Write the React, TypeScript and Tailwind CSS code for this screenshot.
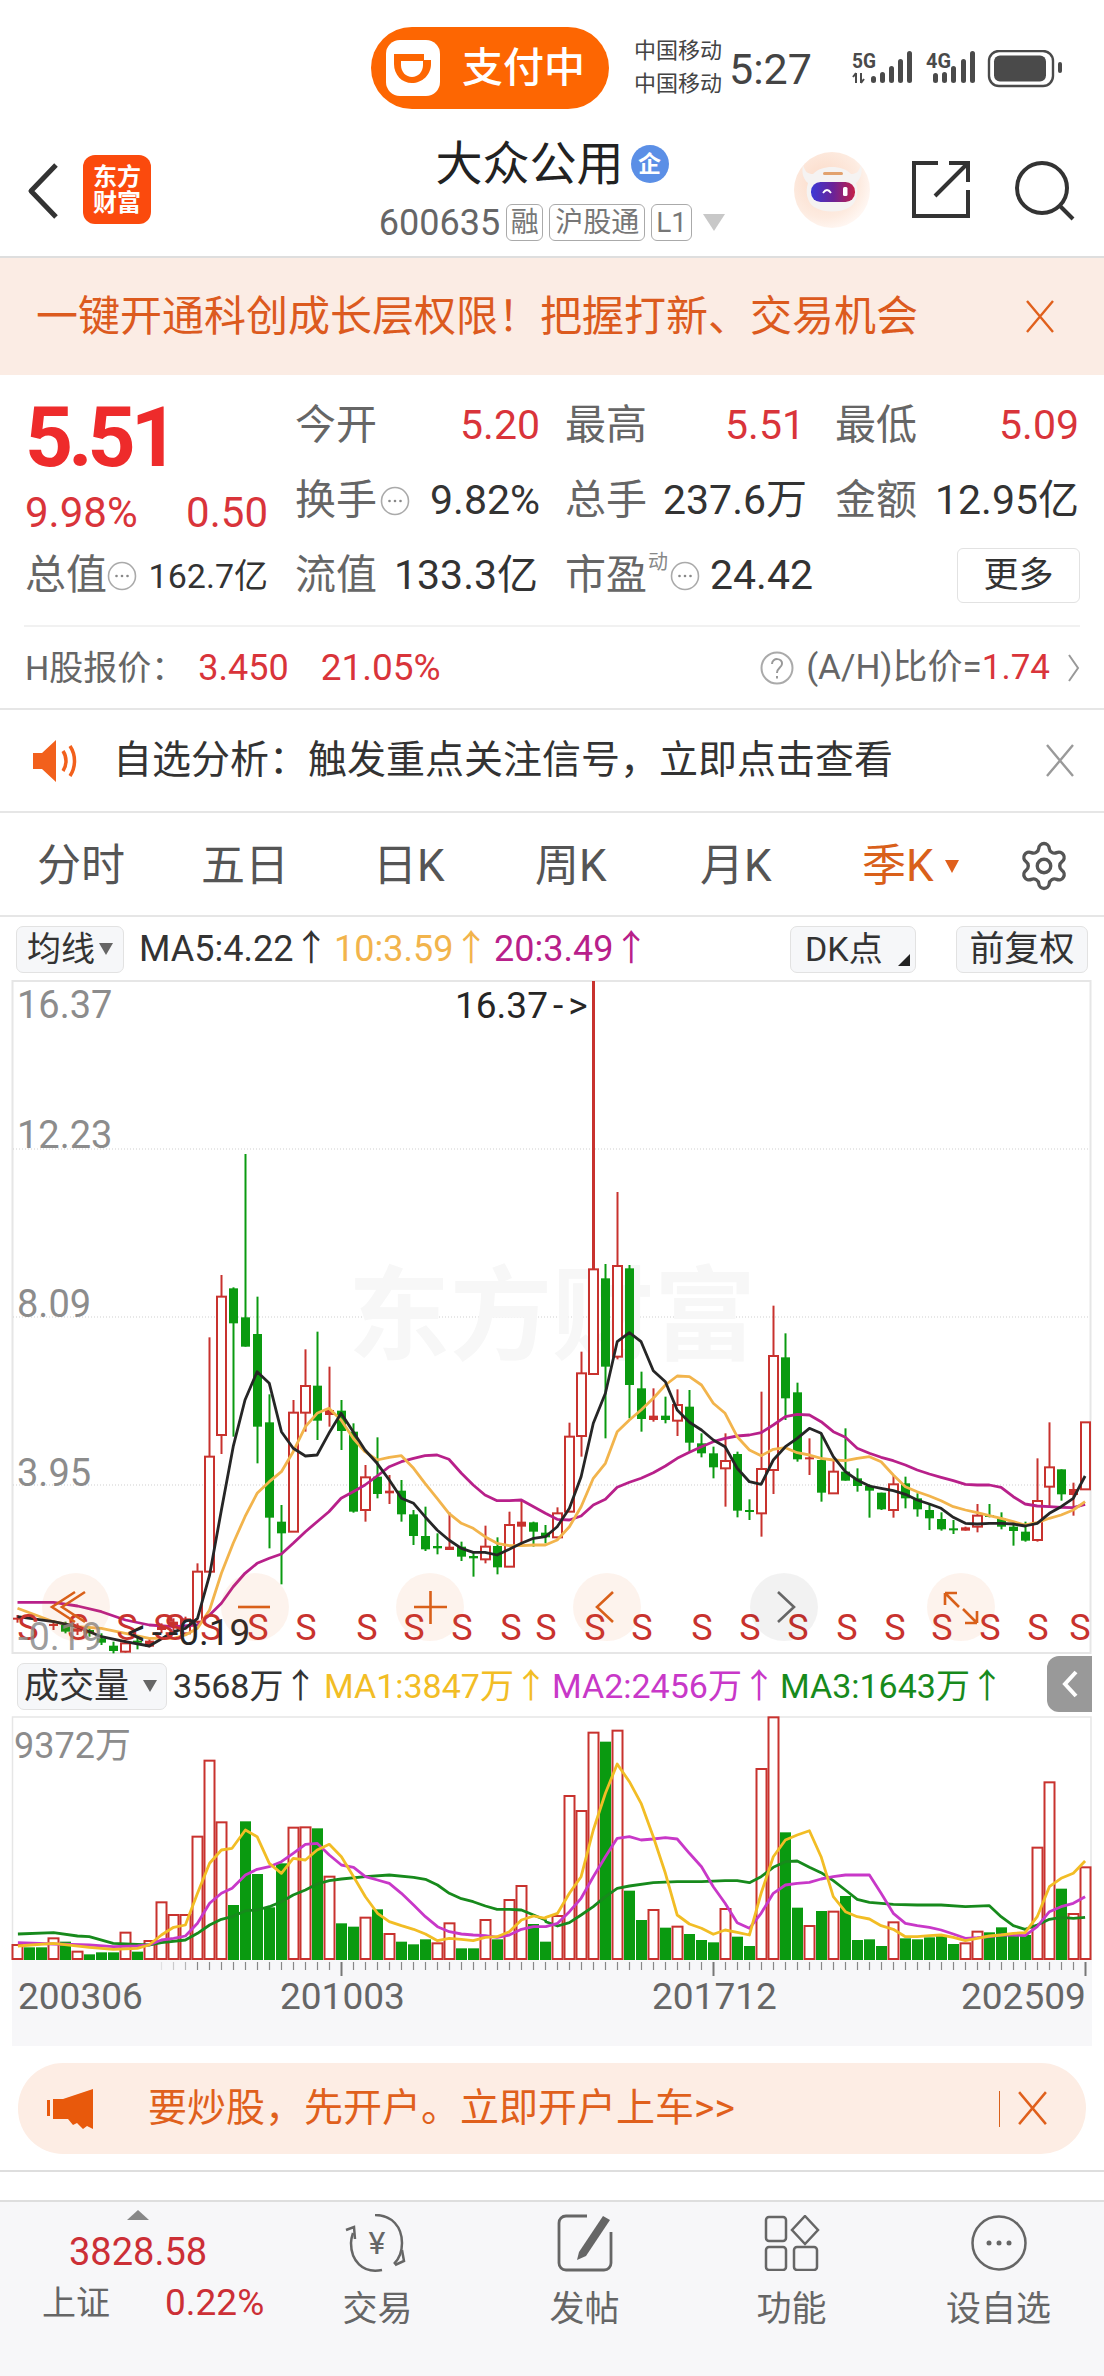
import type { ReactNode } from 'react';
import { Settings } from 'lucide-react';

const RED = '#c8322e';
const GREEN = '#0a9a10';

// points are read off the chart at 2.8x / 3x, kept in that scale
const mapLine = (left: number[], right: number[], top: number) => {
  const out: string[] = [];
  for (let i = 0; i < left.length; i += 2) out.push(`${(left[i] / 2.8).toFixed(1)},${(top + left[i + 1] / 3).toFixed(1)}`);
  for (let i = 0; i < right.length; i += 2) out.push(`${(544 + right[i] / 2.8).toFixed(1)},${(top + right[i + 1] / 3).toFixed(1)}`);
  return out.join(' ');
};

const maBlack = mapLine(
  [49,1100,150,1115,217,1130,284,1160,351,1175,418,1188,486,1145,519,1135,553,1105,587,975,620,780,653,590,686,450,720,365,754,400,788,545,821,595,855,618,888,615,921,550,955,490,989,545,1022,600,1056,640,1090,690,1124,745,1158,760,1190,800,1224,840,1257,870,1292,895,1325,907,1358,907,1392,915,1426,898,1460,880,1494,865,1527,860],
  [37,830,71,775,104,680,138,520,172,430,205,275,239,248,272,275,306,362,340,395,373,480,407,517,441,540,474,570,507,590,541,655,575,695,608,703,642,630,676,590,709,565,743,535,776,550,810,620,844,665,877,690,911,708,944,715,978,722,1012,733,1045,750,1079,762,1112,775,1146,802,1180,820,1213,822,1247,820,1280,820,1314,822,1347,828,1381,820,1415,790,1448,770,1482,745,1515,678],
  1250,
);
const maYellow = mapLine(
  [49,1075,150,1115,217,1130,284,1135,351,1150,418,1165,486,1165,519,1155,553,1135,587,1080,620,970,653,880,686,800,720,730,754,695,788,665,821,605,855,530,888,490,921,475,955,510,989,565,1022,605,1056,630,1090,622,1124,617,1158,655,1190,700,1224,745,1257,790,1292,820,1325,835,1358,860,1392,880,1426,887,1460,887,1494,885,1527,885],
  [37,870,71,830,104,770,138,685,172,640,205,545,239,510,272,480,306,445,340,405,373,378,407,380,441,405,474,460,507,490,541,560,575,600,608,617,642,598,676,593,709,608,743,615,776,625,810,630,844,632,877,625,911,620,944,635,978,675,1012,710,1045,725,1079,738,1112,752,1146,770,1180,780,1213,788,1247,797,1280,805,1314,815,1347,825,1381,818,1415,805,1448,795,1482,780,1515,755],
  1250,
);
const maPurple = mapLine(
  [49,1057,150,1057,217,1068,284,1085,351,1110,418,1125,486,1130,553,1125,587,1095,620,1060,653,1010,686,970,720,940,754,925,788,912,821,880,855,845,888,815,921,785,955,745,989,725,1022,705,1056,678,1090,650,1124,635,1158,625,1190,617,1224,615,1257,628,1292,670,1325,705,1358,735,1392,752,1426,752,1460,750,1494,770,1527,790],
  [37,808,71,810,104,798,138,765,172,748,205,712,239,697,272,685,306,668,340,648,373,625,407,607,441,590,474,575,507,565,541,558,575,555,608,548,642,525,676,500,709,493,743,495,776,515,810,545,844,562,877,595,911,610,944,622,978,632,1012,645,1045,660,1079,672,1112,682,1146,692,1180,703,1213,705,1247,705,1280,712,1314,740,1347,762,1381,768,1415,770,1448,772,1482,773,1515,763],
  1250,
);

const volYellow = mapLine(
  [50,858,150,850,250,862,317,868,385,865,417,855,452,825,486,802,519,795,553,700,587,610,620,570,650,565,687,510,720,530,754,610,788,640,821,595,855,600,888,570,922,553,956,590,990,650,1023,710,1057,760,1090,785,1124,797,1158,808,1191,822,1225,842,1258,835,1292,838,1325,842,1359,832,1392,830,1426,815,1460,780,1494,768,1527,775],
  [5,772,38,760,71,700,104,650,138,510,172,400,205,312,239,365,272,430,306,530,340,640,373,765,407,792,441,805,474,823,507,810,541,817,575,825,608,700,642,590,676,540,709,525,743,512,776,590,810,710,844,755,877,770,911,777,944,797,978,808,1012,830,1045,830,1079,827,1112,825,1146,832,1180,842,1213,835,1247,828,1280,825,1314,820,1347,818,1381,770,1415,680,1448,655,1482,640,1515,603],
  1660,
);
const volPurple = mapLine(
  [50,848,150,852,250,855,317,860,385,858,417,855,452,840,486,835,519,828,553,790,587,730,620,700,650,685,687,645,720,628,754,620,788,605,821,580,855,553,888,550,922,585,956,615,990,622,1023,650,1057,660,1090,670,1124,700,1158,735,1191,770,1225,800,1258,815,1292,822,1325,825,1359,827,1392,832,1426,825,1460,808,1494,800,1527,800],
  [5,800,38,790,71,755,104,715,138,650,172,590,205,535,239,530,272,540,306,537,340,533,373,537,407,580,441,620,474,680,507,730,541,788,575,805,608,760,642,700,676,675,709,670,743,667,776,657,810,650,844,645,877,645,911,645,944,700,978,760,1012,790,1045,797,1079,802,1112,810,1146,822,1180,835,1213,833,1247,830,1280,825,1314,825,1347,827,1381,800,1415,755,1448,740,1482,730,1515,710],
  1660,
);
const volGreen = mapLine(
  [50,822,150,818,217,828,250,830,317,850,385,853,417,855,452,848,519,840,553,820,587,795,620,778,650,770,687,752,720,750,754,740,788,725,821,705,855,690,888,672,922,662,956,657,1023,650,1090,645,1158,652,1191,658,1225,675,1258,700,1292,716,1325,725,1359,738,1392,748,1426,748,1460,750,1494,765,1527,780],
  [5,785,38,798,71,788,104,765,138,740,172,710,205,685,239,678,306,668,373,665,441,665,507,662,541,662,575,668,608,650,642,622,676,605,709,603,743,622,776,638,810,662,844,690,877,718,911,727,978,733,1045,735,1112,735,1180,740,1247,737,1280,770,1314,797,1347,808,1381,795,1415,778,1448,772,1482,775,1515,772],
  1660,
);

// i, high, body top, body bottom, low, 1 = red
const candles: number[][] = [
  [0,1095,1103,1108,1118,1],[3,1110,1122,1128,1140,1],[4,1115,1125,1145,1150,0],[5,1120,1135,1145,1155,1],[6,1130,1140,1150,1160,0],[7,1150,1165,1178,1185,0],[8,1175,1187,1203,1210,0],[9,1170,1180,1205,1208,1],[10,1160,1172,1175,1198,0],[11,1165,1172,1190,1192,1],[12,1120,1130,1140,1150,1],[13,1105,1115,1130,1140,1],[14,1100,1108,1150,1155,1],
  [15,940,965,1115,1120,1],[16,262,620,965,965,1],[17,75,140,555,612,1],[18,112,115,220,560,0],[19,-288,202,290,290,0],[20,140,252,530,640,0],[21,433,517,803,895,0],[22,765,815,850,1003,0],[23,450,488,845,845,1],[24,298,408,488,545,1],[25,245,407,512,570,0],[26,350,480,495,530,1],[27,450,482,543,600,0],[28,520,545,785,788,0],[29,645,682,780,815,1],[30,562,680,732,745,0],[31,675,722,730,762,1],[32,690,722,793,815,0],[33,780,793,858,885,0],[34,770,858,898,903,0],[35,850,888,895,913,0],[36,787,890,900,900,1],[37,875,890,920,933,0],[38,905,918,925,980,0],[39,827,890,928,940,1],[40,862,888,952,973,0],[41,785,825,950,950,1],[42,750,815,830,885,1],[43,815,817,845,890,0],[44,825,848,862,880,0],[45,772,790,862,865,1],
  [46,518,560,785,785,1],[47,305,370,558,620,1],[48,-807,58,372,372,1],[49,42,85,350,565,0],[50,-174,48,320,328,1],[51,45,55,405,505,0],[52,365,415,507,545,0],[53,415,497,510,515,1],[54,440,497,510,520,0],[55,418,465,512,558,1],[56,420,470,578,605,0],[57,550,580,610,622,0],[58,590,610,652,685,0],[59,550,633,655,770,1],[60,605,612,782,802,0],[61,748,780,783,810,0],[62,425,657,790,860,1],[63,167,318,660,732,1],[64,250,322,445,510,0],[65,398,427,628,635,0],[66,565,622,626,675,1],[67,550,630,728,755,0],[68,630,665,730,732,1],[69,535,665,692,692,0],[70,655,685,708,725,0],[71,703,708,722,803,0],[72,728,728,778,780,0],[73,675,703,780,803,1],[74,680,700,745,775,0],[75,730,745,778,800,0],[76,765,780,805,840,0],[77,787,807,838,842,0],[78,810,835,840,852,0],[79,830,832,842,842,1],[80,762,797,830,847,1],[81,762,795,798,802,0],[82,787,805,830,838,0],[83,825,830,843,887,0],[84,815,845,872,875,0],[85,625,753,870,875,1],[86,517,652,710,770,1],[87,658,658,733,752,0],[88,698,717,735,797,1],[89,517,517,718,718,1],
];

// bar top per index, negative = red hollow bar
const volumes = [-855,862,862,-835,845,-875,883,877,877,-818,875,-843,-727,-765,-765,-530,-302,-487,735,484,642,742,610,-503,-502,505,-650,790,800,-773,748,-822,845,853,838,-850,-790,865,865,-780,838,-720,-678,792,845,-768,-408,-453,-218,245,-212,692,780,-750,803,-800,822,840,847,-747,830,858,-327,-172,517,743,-798,753,-755,708,840,838,858,-787,835,838,832,828,852,-850,-815,817,802,825,825,-563,-367,686,-762,-622];

const sMarks = [28,78,127,164,175,211,258,306,367,414,462,511,546,595,642,702,750,798,847,895,942,990,1038,1080];
const barX = (i: number) => 17.5 + 12 * i;

const PriceChart = () => (
  <svg className="block" width="1104" height="678" viewBox="0 978 1104 678">
    <rect x="12.5" y="981" width="1078" height="672" fill="#fff" stroke="#e6e6e6" strokeWidth="2" />
    <g stroke="#cfcfcf" strokeWidth="1" strokeDasharray="1 2">
      <line x1="13" x2="1090" y1="1149" y2="1149" />
      <line x1="13" x2="1090" y1="1317" y2="1317" />
      <line x1="13" x2="1090" y1="1485" y2="1485" />
    </g>
    <text x="348" y="1352" fontSize="102" fontWeight="700" fill="#f7f7f7">东方财富</text>
    {candles.map(([i, high, top, bottom, low, red]) => {
      const x = barX(i);
      const color = red ? RED : GREEN;
      const y1 = 1250 + top / 3;
      const y2 = 1250 + bottom / 3;
      return (
        <g key={i}>
          <line x1={x} x2={x} y1={1250 + high / 3} y2={1250 + low / 3} stroke={color} strokeWidth={i === 48 ? 3 : 2} />
          {red && y2 - y1 > 7 ? (
            <rect x={x - 4.5} y={y1} width="9" height={y2 - y1} fill="#fff" stroke={color} strokeWidth="2" />
          ) : (
            <rect x={x - 4.5} y={y1} width="9" height={Math.max(y2 - y1, 2)} fill={color} />
          )}
        </g>
      );
    })}
    <polyline points={maPurple} fill="none" stroke="#b8208a" strokeWidth="2.8" strokeLinejoin="round" />
    <polyline points={maYellow} fill="none" stroke="#f2b44c" strokeWidth="2.8" strokeLinejoin="round" />
    <polyline points={maBlack} fill="none" stroke="#262626" strokeWidth="2.8" strokeLinejoin="round" />
    <g fontSize="38" fill="#8c8c8c">
      <text x="17" y="1018">16.37</text>
      <text x="17" y="1148">12.23</text>
      <text x="17" y="1317">8.09</text>
      <text x="17" y="1486">3.95</text>
    </g>
    <text x="455" y="1018" fontSize="37" fill="#262626">
      16.37<tspan dx="5">-</tspan><tspan dx="5">&gt;</tspan>
    </text>
    {sMarks.map((x) => (
      <text key={x} x={x} y="1640" fontSize="36" fill={RED} textAnchor="middle">S</text>
    ))}
    <text x="18" y="1650" fontSize="38" fill="#8c8c8c" fillOpacity="0.85">-0.19</text>
    <text x="127" y="1645" fontSize="37" fill="#262626">
      &lt;<tspan dx="6">-</tspan><tspan dx="6">-0.19</tspan>
    </text>
    {[76, 255, 430, 607, 961].map((x) => (
      <circle key={x} cx={x} cy="1607" r="34" fill="#e0601c" fillOpacity="0.08" />
    ))}
    <circle cx="784" cy="1607" r="34" fill="#000" fillOpacity="0.05" />
    <g fill="none" stroke="#d9601a" strokeWidth="2.6">
      <path d="M86 1592 L63 1607 L86 1622 M76 1592 L53 1607 L76 1622" transform="translate(-1 0)" />
      <path d="M238 1607 H270" />
      <path d="M414 1607 H447 M430.5 1591 V1624" />
      <path d="M613 1592 L597 1607 L613 1622" />
      <path d="M945 1593 V1605 M945 1593 H957 M946 1594 L959 1607 M977 1623 V1611 M977 1623 H965 M976 1622 L963 1609" />
    </g>
    <path d="M778 1592 L794 1607 L778 1622" fill="none" stroke="#666" strokeWidth="2.6" />
  </svg>
);

const VolumeChart = () => (
  <svg className="block" width="1104" height="260" viewBox="0 1716 1104 260">
    <path d="M12.5 1960 V1717 H1091 V1960" fill="#fff" stroke="#e6e6e6" strokeWidth="1.5" />
    <rect x="12" y="1960" width="1080" height="16" fill="#f7f7f9" />
    {volumes.map((v, i) => {
      const x = barX(i);
      const top = 1660 + Math.abs(v) / 3;
      return v < 0 ? (
        <rect key={i} x={x - 5} y={top} width="10" height={1959 - top} fill="#fff" stroke={RED} strokeWidth="2" />
      ) : (
        <rect key={i} x={x - 5.5} y={top} width="11" height={1960 - top} fill={GREEN} />
      );
    })}
    <polyline points={volGreen} fill="none" stroke="#178a1c" strokeWidth="2.8" strokeLinejoin="round" />
    <polyline points={volPurple} fill="none" stroke="#c838c8" strokeWidth="2.8" strokeLinejoin="round" />
    <polyline points={volYellow} fill="none" stroke="#f2bd25" strokeWidth="2.8" strokeLinejoin="round" />
    <text x="14" y="1758" fontSize="36" fill="#8c8c8c">9372万</text>
    {volumes.map((_, i) => {
      if (i < 12) return null;
      const major = i === 27 || i === 58 || i === 89;
      return (
        <line
          key={i}
          x1={barX(i)}
          x2={barX(i)}
          y1="1962"
          y2={major ? 1976 : 1970}
          stroke={major ? '#777' : '#888'}
          strokeOpacity={i < 15 ? 0.2 * (i - 11) : 1}
          strokeWidth={major ? 2 : 1.2}
        />
      );
    })}
  </svg>
);

const DotCircle = () => (
  <svg width="30" height="30" viewBox="0 0 30 30" className="shrink-0">
    <circle cx="15" cy="15" r="13.5" fill="none" stroke="#aaa" strokeWidth="1.6" />
    <circle cx="9.5" cy="15" r="1.3" fill="#888" />
    <circle cx="15" cy="15" r="1.3" fill="#888" />
    <circle cx="20.5" cy="15" r="1.3" fill="#888" />
  </svg>
);

const Cross = ({ color, size = 32, width = 2.4 }: { color: string; size?: number; width?: number }) => (
  <svg width={size} height={size * 1.1} viewBox="0 0 32 35" className="shrink-0">
    <path d="M3 2 L29 33 M29 2 L3 33" stroke={color} strokeWidth={width} fill="none" />
  </svg>
);

const Tag = ({ children, className }: { children: string; className: string }) => (
  <span className={`flex h-[37px] items-center justify-center rounded-[6px] border border-[#aaa] text-[28px] leading-none text-[#777] ${className}`}>
    {children}
  </span>
);

const signalBars = (xs: number[], tops: number[]) =>
  xs.map((x, i) => <rect key={x} x={x} y={tops[i]} width="5" height={33 - tops[i]} rx="2.5" fill="#4a4a4a" />);

const StatusIcons = () => (
  <svg width="212" height="38" viewBox="0 0 212 38">
    <text x="1" y="18" fontSize="21" fontWeight="700" fill="#4a4a4a" textLength="24" lengthAdjust="spacingAndGlyphs">5G</text>
    <path d="M5 33 V23 M2 27 L5 23 M10 23 V33 M10 33 L13 29" stroke="#4a4a4a" strokeWidth="2" fill="none" />
    {signalBars([20, 29, 38, 47, 56], [26, 22, 16, 9, 1])}
    <text x="75" y="18" fontSize="21" fontWeight="700" fill="#4a4a4a" textLength="25" lengthAdjust="spacingAndGlyphs">4G</text>
    {signalBars([82, 91, 100, 110, 119], [23, 22, 16, 9, 1])}
    <rect x="138" y="1" width="64" height="35" rx="10" fill="none" stroke="#4a4a4a" strokeWidth="2.4" />
    <rect x="143" y="5.5" width="52" height="26" rx="6" fill="#4a4a4a" />
    <rect x="207" y="12" width="4" height="11" rx="2" fill="#4a4a4a" />
  </svg>
);

const StatusBar = () => (
  <div className="flex h-[130px] items-start pt-[27px] pl-[371px]">
    <div className="flex h-[82px] w-[238px] items-center rounded-[41px] bg-[#fd6602] pl-[15px]">
      <svg width="54" height="56" viewBox="0 0 54 56">
        <rect width="54" height="56" rx="14" fill="#fff" />
        <path d="M8 14 H38 V20 H45 V24 C45 35 36 43 26 43 C16 43 8 35 8 24 Z" fill="#fd6602" />
        <path d="M15 21 H37 V25 C37 32 32 37 26 37 C20 37 15 32 15 25 Z" fill="#fff" />
      </svg>
      <span className="ml-[22px] text-[41px] leading-none font-medium text-white">支付中</span>
    </div>
    <div className="mt-[13px] ml-[25px] flex w-[88px] flex-col gap-[11px] text-[22px] leading-[22px] text-[#444]">
      <span>中国移动</span>
      <span>中国移动</span>
    </div>
    <span className="mt-[20px] ml-[7px] w-[80px] text-[43px] leading-[45px] text-[#444]">5:27</span>
    <div className="mt-[23px] ml-[42px]">
      <StatusIcons />
    </div>
  </div>
);

const Robot = () => (
  <svg width="76" height="76" viewBox="0 0 76 76">
    <defs>
      <radialGradient id="robot-glow" cx="0.4" cy="0.4" r="0.62">
        <stop offset="0" stopColor="#fbd9c6" />
        <stop offset="0.75" stopColor="#fdebe0" />
        <stop offset="1" stopColor="#fff6f1" />
      </radialGradient>
      <linearGradient id="robot-visor" x1="0" x2="1" y1="0" y2="0">
        <stop offset="0" stopColor="#3b39d6" />
        <stop offset="0.5" stopColor="#6a2398" />
        <stop offset="1" stopColor="#c42048" />
      </linearGradient>
    </defs>
    <circle cx="38" cy="38" r="38" fill="url(#robot-glow)" />
    <path d="M9 13 C11 20 14 22 19 22 C24 17 30 15 38 15 C46 15 52 17 57 22 C62 22 65 20 67 13 C69 21 66 28 62 31 C65 40 63 50 56 55 C46 61 30 61 20 55 C13 50 11 40 14 31 C10 28 7 21 9 13 Z" fill="#f5f3f2" />
    <rect x="17" y="30" width="44" height="20" rx="9.5" fill="url(#robot-visor)" />
    <path d="M29 41 Q33 35 37 41" stroke="#fff" strokeWidth="1.8" fill="none" />
    <rect x="49" y="35" width="4.5" height="9" rx="1.5" fill="#fff" />
    <rect x="29" y="20" width="20" height="3" rx="1.5" fill="#e2a26e" />
  </svg>
);

const Header = () => (
  <div className="grid h-[128px] grid-cols-[340px_1fr_340px] border-b-2 border-[#dedede]">
    <div className="flex items-start pt-[25px] pl-[27px]">
      <svg width="32" height="56" viewBox="0 0 32 56" className="mt-[8px]">
        <path d="M29 2 L4 28 L29 54" fill="none" stroke="#333" strokeWidth="5" strokeLinejoin="round" />
      </svg>
      <div className="ml-[24px] flex h-[69px] w-[68px] flex-col items-center justify-center rounded-[12px] bg-[#fb4a0d] text-[24px] leading-[26px] font-bold text-white">
        <span>东方</span>
        <span>财富</span>
      </div>
    </div>
    <div className="flex flex-col items-center pt-[10px]">
      <div className="flex items-center gap-[7px]">
        <span className="text-[47px] leading-[48px] text-[#222]">大众公用</span>
        <span className="flex size-[38px] items-center justify-center rounded-full bg-[#5b8fe6] text-[23px] leading-none font-bold text-white">企</span>
      </div>
      <div className="mt-[16px] flex items-center gap-[6px]">
        <span className="text-[36px] leading-none text-[#666]">600635</span>
        <Tag className="w-[37px]">融</Tag>
        <Tag className="w-[96px]">沪股通</Tag>
        <Tag className="w-[41px]">L1</Tag>
        <svg width="22" height="17" viewBox="0 0 22 17" className="ml-[5px]">
          <path d="M0 0 H22 L11 17 Z" fill="#c8c8c8" />
        </svg>
      </div>
    </div>
    <div className="flex items-start justify-end pt-[22px] pr-[28px]">
      <Robot />
      <svg width="60" height="60" viewBox="0 0 60 60" className="mt-[8px] ml-[41px]">
        <path d="M27 3 H3 V56 H57 V30" fill="none" stroke="#333" strokeWidth="4" />
        <path d="M24 36 L56 4 M38 3 H57 V22" fill="none" stroke="#333" strokeWidth="4" />
      </svg>
      <svg width="62" height="62" viewBox="0 0 62 62" className="mt-[8px] ml-[43px]">
        <circle cx="28" cy="28" r="25" fill="none" stroke="#333" strokeWidth="4" />
        <path d="M46 46 L59 59" stroke="#333" strokeWidth="4" />
      </svg>
    </div>
  </div>
);

const ValueCell = ({ label, value, red, icon, className }: { label: string; value: string; red?: boolean; icon?: boolean; className: string }) => (
  <div className={`flex items-center ${className}`}>
    <span className="text-[41px] leading-none whitespace-nowrap text-[#666]">{label}</span>
    {icon && <span className="ml-[3px]"><DotCircle /></span>}
    <span className={`ml-auto text-[41px] leading-none whitespace-nowrap ${red ? 'text-[#d9343a]' : 'text-[#333]'}`}>{value}</span>
  </div>
);

const Quote = () => (
  <div className="flex pt-[13px]">
    <div className="flex w-[295px] shrink-0 flex-col pl-[25px]">
      <div className="flex h-[100px] items-center">
        <span className="text-[84px] leading-none font-bold tracking-[-5px] text-[#ee2b2b]">5.51</span>
      </div>
      <div className="flex h-[50px] w-[243px] items-center justify-between text-[42px] leading-none text-[#d9343a]">
        <span>9.98%</span>
        <span>0.50</span>
      </div>
      <div className="flex h-[75px] w-[243px] items-center">
        <span className="text-[41px] leading-none whitespace-nowrap text-[#666]">总值</span>
        <DotCircle />
        <span className="ml-auto text-[34px] leading-none whitespace-nowrap text-[#333]">162.7亿</span>
      </div>
    </div>
    <div className="flex flex-col">
      <div className="flex h-[75px] items-center">
        <ValueCell label="今开" value="5.20" red className="w-[245px]" />
        <ValueCell label="最高" value="5.51" red className="ml-[25px] w-[240px]" />
        <ValueCell label="最低" value="5.09" red className="ml-[30px] w-[244px]" />
      </div>
      <div className="flex h-[75px] items-center">
        <ValueCell label="换手" value="9.82%" icon className="w-[245px]" />
        <ValueCell label="总手" value="237.6万" className="ml-[25px] w-[242px]" />
        <ValueCell label="金额" value="12.95亿" className="ml-[28px] w-[244px]" />
      </div>
      <div className="flex h-[75px] items-center">
        <ValueCell label="流值" value="133.3亿" className="w-[243px]" />
        <div className="ml-[27px] flex w-[245px] shrink-0 items-center whitespace-nowrap">
          <span className="text-[41px] leading-none text-[#666]">市盈</span>
          <span className="mt-[-28px] ml-[1px] text-[20px] leading-none text-[#888]">动</span>
          <span className="ml-[2px]"><DotCircle /></span>
          <span className="ml-[10px] text-[41px] leading-none text-[#333]">24.42</span>
        </div>
        <button type="button" className="ml-[147px] flex h-[55px] w-[123px] shrink-0 items-center justify-center rounded-[6px] border border-[#e2e2e2] text-[35px] leading-none text-[#333]">
          更多
        </button>
      </div>
    </div>
  </div>
);

const HRow = () => (
  <div className="mx-[24px] mt-[12px] flex h-[83px] items-center border-t-2 border-[#f1f1f1]">
    <span className="ml-[1px] text-[34px] leading-none text-[#666]">{'H股报价\uFF1A'}</span>
    <span className="ml-[13px] text-[36px] leading-none text-[#d9343a]">3.450</span>
    <span className="ml-[32px] text-[37px] leading-none text-[#d9343a]">21.05%</span>
    <svg width="34" height="34" viewBox="0 0 34 34" className="ml-auto">
      <circle cx="17" cy="17" r="15.5" fill="none" stroke="#aaa" strokeWidth="2" />
      <path d="M12 13 C12 6 23 7 22 13 C21.5 17 17 17 17 22 M17 25 V27.5" fill="none" stroke="#999" strokeWidth="2" />
    </svg>
    <span className="ml-[12px] text-[35px] leading-none text-[#666]">(A/H)比价=<span className="text-[#d9343a]">1.74</span></span>
    <svg width="13" height="30" viewBox="0 0 13 30" className="ml-[17px]">
      <path d="M2 2 L11 15 L2 28" fill="none" stroke="#999" strokeWidth="2" />
    </svg>
  </div>
);

const Notice = () => (
  <div className="flex h-[105px] items-center border-y-2 border-[#e6e6e6] pr-[28px] pl-[33px]">
    <svg width="46" height="44" viewBox="0 0 46 44">
      <path d="M0 14 H9 L23 1 V43 L9 30 H0 Z" fill="#f2601c" />
      <path d="M30 12 C34 18 34 26 30 32 M37 7 C43 16 43 28 37 37" fill="none" stroke="#f2601c" strokeWidth="3.5" />
    </svg>
    <span className="ml-[34px] text-[39px] leading-none text-[#333]">{'自选分析\uFF1A触发重点关注信号\uFF0C立即点击查看'}</span>
    <span className="ml-auto"><Cross color="#9a9a9a" /></span>
  </div>
);

const tabs = [
  { label: '分时', className: 'ml-[37px] w-[88px]' },
  { label: '五日', className: 'ml-[76px] w-[88px]' },
  { label: '日K', className: 'ml-[84px] w-[72px]' },
  { label: '周K', className: 'ml-[90px] w-[73px]' },
  { label: '月K', className: 'ml-[92px] w-[72px]' },
];

const Tabs = () => (
  <div className="flex h-[104px] items-center border-b-2 border-[#e6e6e6] pt-[4px]">
    {tabs.map((tab) => (
      <span key={tab.label} className={`text-[44px] leading-none whitespace-nowrap text-[#555] ${tab.className}`}>{tab.label}</span>
    ))}
    <span className="ml-[90px] w-[73px] text-[44px] leading-none whitespace-nowrap text-[#d9601a]">季K</span>
    <svg width="14" height="13" viewBox="0 0 14 13" className="ml-[10px]">
      <path d="M0 0 H14 L7 13 Z" fill="#e0601c" />
    </svg>
    <Settings size={54} strokeWidth={1.5} color="#555" className="ml-[58px]" />
  </div>
);

const Down = ({ className }: { className: string }) => (
  <svg width="14" height="12" viewBox="0 0 14 12" className={className}>
    <path d="M0 0 H14 L7 12 Z" fill="#666" />
  </svg>
);

const PriceToolbar = () => (
  <div className="flex h-[61px] items-center pt-[8px] pb-[5px] text-[36px] leading-none whitespace-nowrap">
    <span className="ml-[16px] flex h-[47px] w-[108px] items-center rounded-[7px] border border-[#e2e2e2] bg-[#f6f7f9] pl-[10px] text-[34px] leading-none text-[#333]">
      均线<Down className="ml-[4px]" />
    </span>
    <span className="ml-[15px] w-[195px] text-[#333]">MA5:4.22↑</span>
    <span className="w-[160px] text-[#f2b44c]">10:3.59↑</span>
    <span className="w-[296px] text-[#b8208a]">20:3.49↑</span>
    <span className="relative flex h-[47px] w-[126px] items-center rounded-[7px] border border-[#e2e2e2] bg-[#f6f7f9] pl-[14px] text-[34px] leading-none text-[#333]">
      DK点
      <svg width="12" height="12" viewBox="0 0 12 12" className="absolute right-[5px] bottom-[6px]">
        <path d="M12 0 V12 H0 Z" fill="#222" />
      </svg>
    </span>
    <span className="ml-[40px] flex h-[47px] w-[132px] items-center justify-center rounded-[7px] border border-[#e2e2e2] bg-[#f6f7f9] text-[35px] leading-none text-[#333]">前复权</span>
  </div>
);

const VolumeToolbar = () => (
  <div className="relative flex h-[60px] items-center text-[34px] leading-none whitespace-nowrap">
    <span className="ml-[17px] flex h-[47px] w-[150px] items-center rounded-[7px] border border-[#e2e2e2] bg-[#f6f7f9] pl-[6px] text-[35px] leading-none text-[#333]">
      成交量<Down className="ml-[14px]" />
    </span>
    <span className="ml-[6px] w-[151px] text-[#333]">3568万↑</span>
    <span className="w-[228px] text-[#f2bd25]">MA1:3847万↑</span>
    <span className="w-[228px] text-[#c838c8]">MA2:2456万↑</span>
    <span className="text-[#178a1c]">MA3:1643万↑</span>
    <span className="absolute top-0 right-[12px] flex h-[56px] w-[45px] items-center justify-center rounded-l-[12px] bg-[#999]">
      <svg width="18" height="30" viewBox="0 0 18 30">
        <path d="M15 3 L4 15 L15 27" fill="none" stroke="#fff" strokeWidth="4" />
      </svg>
    </span>
  </div>
);

const DateAxis = () => (
  <div className="mx-[12px] flex h-[70px] items-start bg-[#f7f7f9] pt-[3px] pl-[6px] text-[37px] leading-[36px] text-[#666]">
    <span className="w-[124px]">200306</span>
    <span className="ml-[138px] w-[124px]">201003</span>
    <span className="ml-[248px] w-[124px]">201712</span>
    <span className="ml-[185px] w-[124px]">202509</span>
  </div>
);

const Promo = () => (
  <div className="mx-[18px] mt-[17px] flex h-[91px] items-center rounded-[45px] bg-[#fdede4] pr-[37px] pl-[29px]">
    <svg width="46" height="40" viewBox="0 0 46 40">
      <path d="M0 11 H3 V27 H0 Z M6 10 H16 L46 0 V40 L40 37 L36 40 L30 34 L26 36 L21 30 H6 Z" fill="#e8590c" />
    </svg>
    <span className="ml-[55px] text-[39px] leading-none text-[#e0601c]">{'要炒股\uFF0C先开户\u3002立即开户上车>>'}</span>
    <span className="ml-auto h-[36px] w-px bg-[#d9601a]" />
    <span className="ml-[16px]"><Cross color="#e0601c" size={33} /></span>
  </div>
);

const NavItem = ({ label, children }: { label: string; children: ReactNode }) => (
  <div className="flex flex-col items-center pt-[12px]">
    <div className="flex h-[58px] items-center justify-center">{children}</div>
    <span className="mt-[20px] text-[35px] leading-none text-[#666]">{label}</span>
  </div>
);

const BottomNav = () => (
  <div className="grid h-[176px] grid-cols-[274px_repeat(4,207px)] border-t-2 border-[#dedede] bg-[#f7f7f9]">
    <div className="flex flex-col pt-[8px]">
      <svg width="22" height="10" viewBox="0 0 22 10" className="ml-[127px]">
        <path d="M11 0 L22 10 H0 Z" fill="#888" />
      </svg>
      <span className="mt-[14px] ml-[69px] text-[38px] leading-[36px] text-[#cc2f36]">3828.58</span>
      <div className="mt-[14px] flex items-center pl-[42px]">
        <span className="w-[123px] text-[34px] leading-none text-[#666]">上证</span>
        <span className="text-[37px] leading-none text-[#cc2f36]">0.22%</span>
      </div>
    </div>
    <NavItem label="交易">
      <svg width="68" height="58" viewBox="0 0 68 58">
        <path d="M31 1 C48 1 58 13 58 29 C58 38 55 45 50 50 M38 56 C18 60 7 46 7 29 C7 25 8 22 9 19" fill="none" stroke="#666" strokeWidth="2.5" />
        <path d="M2 16 L10 13 L11 25 M58 36 L60 47 L51 51" fill="none" stroke="#666" strokeWidth="2.5" />
        <text x="33" y="40" fontSize="32" fill="#666" textAnchor="middle">¥</text>
      </svg>
    </NavItem>
    <NavItem label="发帖">
      <svg width="56" height="58" viewBox="0 0 56 58">
        <path d="M30 2 H9 C5 2 2 5 2 9 V49 C2 53 5 56 9 56 H47 C51 56 54 53 54 49 V18" fill="none" stroke="#666" strokeWidth="2.8" />
        <path d="M22 38 L46 2 L53 6 L29 42 L20 46 Z" fill="#666" />
      </svg>
    </NavItem>
    <NavItem label="功能">
      <svg width="56" height="56" viewBox="0 0 56 56">
        <rect x="2" y="2" width="20" height="24" rx="3" fill="none" stroke="#666" strokeWidth="2.5" />
        <path d="M41 1 L54 15 L41 29 L28 15 Z" fill="none" stroke="#666" strokeWidth="2.5" />
        <rect x="2" y="32" width="20" height="23" rx="3" fill="none" stroke="#666" strokeWidth="2.5" />
        <rect x="30" y="32" width="23" height="23" rx="3" fill="none" stroke="#666" strokeWidth="2.5" />
      </svg>
    </NavItem>
    <NavItem label="设自选">
      <svg width="56" height="56" viewBox="0 0 56 56">
        <circle cx="28" cy="28" r="26.5" fill="none" stroke="#666" strokeWidth="2.5" />
        <circle cx="18" cy="28" r="2.5" fill="#666" />
        <circle cx="28" cy="28" r="2.5" fill="#666" />
        <circle cx="38" cy="28" r="2.5" fill="#666" />
      </svg>
    </NavItem>
  </div>
);

export default function App() {
  return (
    <div className="h-[2376px] w-[1104px] overflow-hidden bg-white font-[Roboto,'Noto_Sans_CJK_SC',sans-serif]">
      <StatusBar />
      <Header />
      <div className="flex h-[117px] items-center justify-between bg-[#fbece4] pr-[48px] pl-[36px]">
        <span className="text-[42px] leading-none text-[#dc5a1e]">{'一键开通科创成长层权限\uFF01把握打新\u3001交易机会'}</span>
        <Cross color="#e0601c" size={32} />
      </div>
      <Quote />
      <HRow />
      <Notice />
      <Tabs />
      <PriceToolbar />
      <PriceChart />
      <VolumeToolbar />
      <VolumeChart />
      <DateAxis />
      <Promo />
      <div className="mt-[16px] h-[30px] border-t-2 border-[#dedede]" />
      <BottomNav />
    </div>
  );
}
